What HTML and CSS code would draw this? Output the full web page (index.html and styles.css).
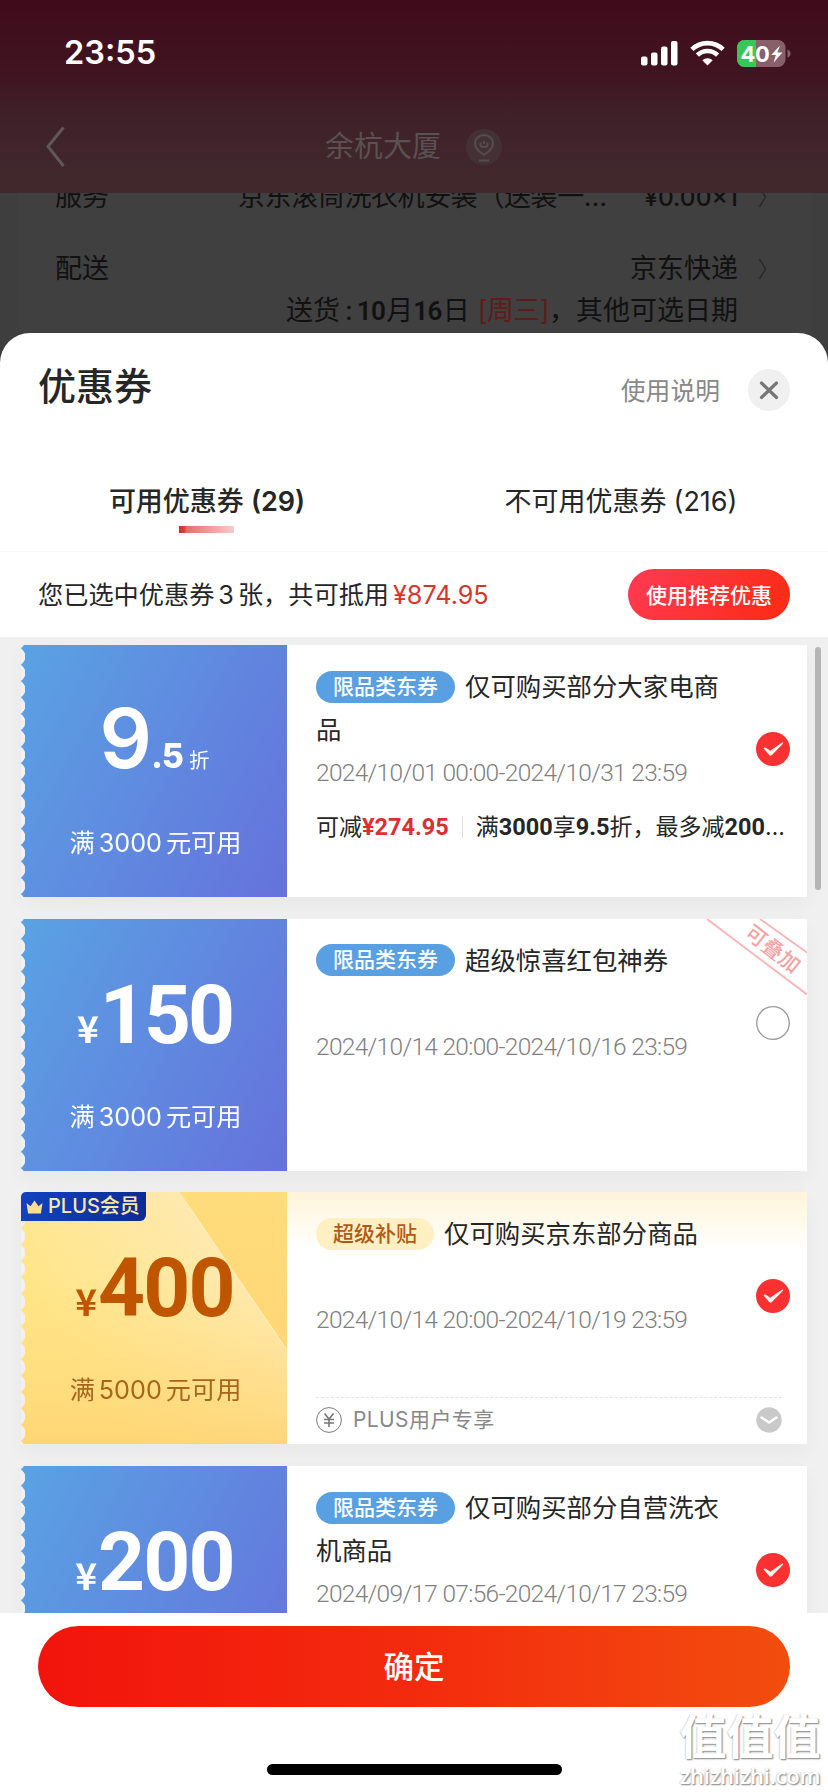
FILE: index.html
```html
<!DOCTYPE html>
<html lang="zh-CN">
<head>
<meta charset="utf-8">
<title>优惠券</title>
<link rel="stylesheet" href="styles.css">
</head>
<body>
<svg class="defs" width="0" height="0" aria-hidden="true">
  <symbol id="checked" viewBox="0 0 34 34"><circle cx="17" cy="17" r="17" fill="#fb3030"/><path d="M7.400 16.200Q8.500 14.800 10 15.800L14.200 18.800 25.800 10.700Q27.600 10.200 27 11.800L16 23Q14.600 24.500 13.200 23Z" fill="#fff0ea"/></symbol>
</svg>
<div class="screen">
  <header class="topbar">
    <div class="status">
      <span class="time">23:55</span>
      <div class="status-icons">
        <svg width="37" height="25" viewBox="0 0 37 25" fill="#fff"><rect x="0" y="15.500" width="6.500" height="9" rx="2"/><rect x="10" y="11.500" width="6.500" height="13" rx="2"/><rect x="20" y="5.500" width="6.500" height="19" rx="2"/><rect x="30" y="0" width="6.500" height="24.500" rx="2"/></svg>
        <svg width="35" height="26" viewBox="0 0 35 26" fill="none" stroke="#fff" stroke-width="4.600"><path d="M1.900 9.400a22.500 22.500 0 0 1 31.200 0"/><path d="M7.400 15.100a14.500 14.500 0 0 1 20.200 0"/><path d="M17.500 25.500l-5.200-5.200a7.500 7.500 0 0 1 10.400 0z" fill="#fff" stroke="none"/></svg>
        <svg width="54" height="27" viewBox="0 0 54 27"><defs><clipPath id="bat"><rect width="48.500" height="27" rx="7.500"/></clipPath></defs><g clip-path="url(#bat)"><rect width="49" height="27" fill="#87606a"/><rect width="19" height="27" fill="#37c658"/></g><path d="M50.500 9.500q3 1 3 4t-3 4z" fill="#87606a"/><text x="3.500" y="22" class="bat-num">40</text><path d="M43 5.500L34.200 15h4.700l-2.400 7.800L45.400 12.600h-5z" fill="#fff"/></svg>
      </div>
    </div>
    <div class="nav">
      <svg class="back" width="22" height="42" viewBox="0 0 22 42" fill="none" stroke="#5f585a" stroke-width="3"><path d="M18.500 1.500L3 20.500 18.500 40"/></svg>
      <span class="store">余杭大厦</span>
      <svg class="pin" width="36" height="36" viewBox="0 0 36 36" fill="none" stroke="#564c4e" stroke-width="2"><circle cx="18" cy="18" r="18" fill="#443135" stroke="none"/><path d="M18 26q-9-6-9-11.500a9 8.500 0 0 1 18 0q0 5.500-9 11.500z"/><path d="M14.500 13.500v2q0 2.500 3.500 2.500t3.500-2.500v-2M18 12v3M13 31.500h10"/></svg>
    </div>
  </header>

  <section class="order">
    <div class="order-row first"><span class="lbl">服务</span><span class="svc">京东滚筒洗衣机安装（送装一…</span><span class="amt">¥0.00×1</span><svg class="chev" width="9" height="22" viewBox="0 0 9 22"><path d="M1.500 1L7.500 11 1.500 21"/></svg></div>
    <div class="order-row"><span class="lbl">配送</span><span class="express">京东快递</span><svg class="chev" width="9" height="22" viewBox="0 0 9 22"><path d="M1.500 1L7.500 11 1.500 21"/></svg></div>
    <div class="order-row date-row"><span>送货</span><span class="colon">:</span><b>10</b><span>月</span><b>16</b><span>日</span><em>[周三]</em><span>，其他可选日期</span></div>
  </section>

  <main class="sheet">
    <div class="sheet-head">
      <h1>优惠券</h1>
      <span class="help">使用说明</span>
      <svg class="close" width="42" height="42" viewBox="0 0 42 42"><circle cx="21" cy="21" r="21" fill="#f0f0f0"/><path d="M13.500 14L28.500 28.500M28.500 14L13.500 28.500" stroke="#777" stroke-width="3.200" stroke-linecap="round"/></svg>
    </div>
    <nav class="tabs">
      <div class="tab active"><span>可用优惠券</span><span class="count">(29)</span></div>
      <div class="tab"><span>不可用优惠券</span><span class="count">(216)</span></div>
    </nav>
    <div class="summary">
      <span class="picked">您已选中优惠券<i>3</i>张，共可抵用</span><span class="saved">¥874.95</span>
      <button class="recommend">使用推荐优惠</button>
    </div>

    <div class="list">
      <article class="coupon">
        <div class="face">
          <div class="value"><span class="nine">9</span><span class="frac">.5</span><span class="zhe">折</span></div>
          <div class="cond">满<i>3000</i>元可用</div>
        </div>
        <div class="info">
          <div class="name"><span class="tag">限品类东券</span>仅可购买部分大家电商<br>品</div>
          <time>2024/10/01 00:00-2024/10/31 23:59</time>
          <div class="detail"><span>可减</span><b class="red">¥274.95</b><span class="bar"></span><span>满</span><b>3000</b><span>享</span><b>9.5</b><span>折，最多减</span><b>200</b><span>…</span></div>
          <svg class="mark"><use href="#checked"/></svg>
        </div>
      </article>

      <article class="coupon">
        <div class="face">
          <div class="value"><span class="yen">¥</span><span class="num one">150</span></div>
          <div class="cond">满<i>3000</i>元可用</div>
        </div>
        <div class="info">
          <div class="name"><span class="tag">限品类东券</span>超级惊喜红包神券</div>
          <time>2024/10/14 20:00-2024/10/16 23:59</time>
          <svg class="ribbon" width="100" height="76" viewBox="0 0 100 76"><path d="M0 0L100 75.500M53 0L100 33.500" stroke="#f7b3b5" stroke-width="1.800"/><text transform="translate(66 30) rotate(38)" text-anchor="middle" class="ribbon-text" x="0" y="7.500">可叠加</text></svg>
          <svg class="mark" viewBox="0 0 34 34"><circle cx="17" cy="17" r="16.300" fill="#fff" stroke="#999" stroke-width="1.300"/></svg>
        </div>
      </article>

      <article class="coupon gold">
        <div class="face">
          <svg class="shine" width="266" height="252" viewBox="0 0 266 252"><defs><linearGradient id="ray" gradientUnits="userSpaceOnUse" x1="210" y1="55" x2="50" y2="165"><stop offset="0" stop-color="#ffe9b0"/><stop offset="1" stop-color="#ffe587"/></linearGradient><linearGradient id="low" x1="0" y1="0" x2="0" y2="1"><stop offset=".35" stop-color="#ffdc7c" stop-opacity="0"/><stop offset="1" stop-color="#ffd271" stop-opacity=".8"/></linearGradient></defs><path d="M0 0H158L266 158V252H0Z" fill="url(#ray)"/><path d="M0 0H158L266 158V252H0Z" fill="url(#low)"/><path d="M158 0L266 158" stroke="#fff0c4" stroke-width="1"/></svg>
          <div class="value"><span class="yen">¥</span><span class="num">400</span></div>
          <div class="cond">满<i>5000</i>元可用</div>
        </div>
        <div class="plus"><svg width="17" height="14" viewBox="0 0 17 14"><path d="M.5 3l4 3.200L8.500.500l4 5.700 4-3.200-1.600 10.500H2.100z" fill="#ffe08c"/></svg><span>PLUS会员</span></div>
        <div class="info">
          <div class="name"><span class="tag">超级补贴</span>仅可购买京东部分商品</div>
          <time>2024/10/14 20:00-2024/10/19 23:59</time>
          <svg class="mark"><use href="#checked"/></svg>
          <div class="member">
            <svg width="26" height="26" viewBox="0 0 26 26" fill="none" stroke="#777"><circle cx="13" cy="13" r="12.400"/><path d="M8.500 6.500l4.500 5.500 4.500-5.500M13 12v8M8 12.500h10M8 16h10" stroke-width="1.600"/></svg>
            <span>PLUS用户专享</span>
            <svg class="more" width="26" height="26" viewBox="0 0 26 26"><circle cx="13" cy="13" r="12.700" fill="#c9c9c9"/><path d="M5.500 10.500l7.500 5 7.500-5" fill="none" stroke="#fff" stroke-width="2.600" stroke-linecap="round" stroke-linejoin="round"/></svg>
          </div>
        </div>
      </article>

      <article class="coupon">
        <div class="face">
          <div class="value"><span class="yen">¥</span><span class="num">200</span></div>
        </div>
        <div class="info">
          <div class="name"><span class="tag">限品类东券</span>仅可购买部分自营洗衣<br>机商品</div>
          <time>2024/09/17 07:56-2024/10/17 23:59</time>
          <svg class="mark"><use href="#checked"/></svg>
        </div>
      </article>
      <span class="scrollbar"></span>
    </div>

    <footer>
      <button class="confirm">确定</button>
      <div class="home"></div>
      <div class="watermark"><span class="wm-big">值值值</span><span class="wm-url">zhizhizhi.com</span></div>
    </footer>
  </main>
</div>
</body>
</html>
```
FILE: styles.css
```css
* { box-sizing: border-box; margin: 0; padding: 0; }
body { width: 828px; height: 1792px; overflow: hidden; background: #3e3e3e; font-family: Inter, "Noto Sans CJK SC", sans-serif; color: #262626; }
svg { display: block; flex: none; }
i, em { font-style: normal; }
.defs { position: absolute; }
.screen { display: flex; flex-direction: column; height: 1792px; white-space: nowrap; }

/* dimmed page behind the sheet */
.topbar { height: 193px; flex: none; background: linear-gradient(#400b1a, #401420 38%, #402028 58%, #40282d 90%); }
.status { height: 106px; display: flex; align-items: center; justify-content: space-between; padding: 0 37px 0 64px; }
.time { font-size: 32.500px; line-height: 40px; font-weight: 600; color: #fff; }
.status-icons { display: flex; align-items: center; gap: 12px; }
.bat-num { font: 700 22px Inter, sans-serif; fill: #fff; letter-spacing: -.5px; }
.nav { display: flex; align-items: center; height: 82px; padding-left: 45px; }
.store { margin-left: 258px; font-size: 29px; color: #5a5153; line-height: 40px; }
.pin { margin-left: 25px; }
.order { height: 140px; flex: none; margin: 0 16px 0 18px; background: #404040; color: #111; overflow: hidden; font-size: 27px; line-height: 42px; }
.order-row { display: flex; align-items: center; height: 42px; padding: 0 45px 0 37px; }
.order-row.first { margin-top: -17px; margin-bottom: 30px; }
.svc { margin-left: 129px; width: 372px; letter-spacing: -.4px; }
.amt { margin-left: auto; font-size: 24.500px; font-weight: 500; }
.chev { margin-left: 20px; fill: none; stroke: #2a2a2a; stroke-width: 1.500; }
.express { margin-left: auto; }
.date-row { justify-content: flex-end; padding-right: 74px; }
.date-row b { font: 600 26px/42px Roboto, sans-serif; letter-spacing: -.6px; margin-right: 1px; }
.date-row .colon { margin: 0 4px 0 5px; }
.date-row em { margin-left: 8px; color: #601c18; letter-spacing: -.6px; }

/* sheet */
.sheet { flex: 1; min-height: 0; background: #fff; border-radius: 30px 30px 0 0; display: flex; flex-direction: column; }
.sheet-head { height: 106px; padding: 0 38px 0 38px; display: flex; align-items: center; }
h1 { font-size: 38px; font-weight: 500; line-height: 50px; }
.help { margin: 6px 28px 0 auto; color: #888; font-size: 24.800px; }
.close { margin-top: 8px; }
.tabs { display: flex; height: 113px; border-bottom: 1px solid #f7f7f7; padding-top: 37px; }
.tab { width: 414px; display: flex; justify-content: center; gap: 7px; font-size: 27px; line-height: 52px; position: relative; }
.tab.active { font-weight: 500; }
.active .count { font-weight: 600; }
.tab.active::after { content: ""; position: absolute; left: 179px; top: 50px; width: 55px; height: 7px; background: linear-gradient(90deg, #cf2a20 0, #d9463c 10%, #e27068 14%, #f7cccb); }
.summary { height: 85px; display: flex; align-items: center; padding: 0 38px 0 38px; font-size: 25.200px; flex: none; }
.picked { margin-top: -3px; }
.summary i { margin: 0 4px; }
.saved { color: #d6362c; margin-left: 4px; }
.recommend { margin-left: auto; width: 162px; height: 51px; padding-bottom: 2px; border: 0; border-radius: 26px; background: linear-gradient(120deg, #ff3b54, #fc2a12); color: #fff; font: 500 21px "Noto Sans CJK SC", sans-serif; }

.list { position: relative; flex: none; height: 976px; overflow: hidden; background: #f0f0f0; padding: 8px 21px 0; display: flex; flex-direction: column; gap: 21.700px; }
.coupon { position: relative; flex: none; height: 252px; display: flex; box-shadow: 0 8px 20px rgba(0,0,0,.035); }
/* the mask cuts the perforated left edge */
.face { position: relative; width: 266px; color: #fff; background: linear-gradient(118deg, #5aa1e3 3%, #6573dc 97%); padding-top: 46px;
  -webkit-mask: radial-gradient(circle 9.700px at -5.200px 50%, transparent 96%, #000) 0 3.300px / 100% 16.400px repeat-y;
  mask: radial-gradient(circle 9.700px at -5.200px 50%, transparent 96%, #000) 0 3.300px / 100% 16.400px repeat-y; }
.value { position: relative; height: 100px; display: flex; align-items: baseline; justify-content: center; padding-left: 1px; line-height: 100px; }
.nine { font-size: 82px; font-weight: 600; letter-spacing: -1px; margin-top: -2px; }
.frac { font-size: 34px; font-weight: 800; letter-spacing: -1px; }
.zhe { font-size: 20.500px; margin-left: 6px; }
.yen { font: 700 37px/40px "Noto Sans CJK SC", sans-serif; margin-right: 1px; }
.num { font: 700 82px/100px Roboto, sans-serif; letter-spacing: -1.800px; }
.num.one { letter-spacing: -3px; }
.cond { position: relative; display: flex; justify-content: center; margin-top: 32px; padding-left: 3px; font-size: 25.200px; line-height: 40px; }
.cond i { margin: 0 4px; }
.info { position: relative; flex: 1; min-width: 0; background: #fff; padding: 20px 0 0 29px; }
.name { font-size: 25.400px; line-height: 43px; height: 86px; }
.tag { display: inline-block; vertical-align: 2.500px; height: 32px; line-height: 31px; padding: 0 17px; border-radius: 16px; margin-right: 10px; background: #58a0e1; color: #fff; font-size: 21px; font-weight: 500; }
time { display: block; font: 300 24.500px/44px Roboto, sans-serif; letter-spacing: -.7px; color: #808080; }
.detail { display: flex; align-items: center; font-size: 23px; line-height: 40px; margin-top: 12px; }
.detail b { font: 700 23.500px/40px Roboto, sans-serif; }
.detail .red { color: #dc2f31; }
.bar { width: 1px; height: 22px; background: #ddd; margin: 0 13px; }
.mark { position: absolute; left: 469px; top: 87px; width: 34px; height: 34px; }
.ribbon { position: absolute; right: 0; top: 0; }
.ribbon-text { font: 500 21px "Noto Sans CJK SC", sans-serif; fill: #f4a3a5; }
.gold .face { color: #c05500; background: linear-gradient(#ffdd7a, #ffd272); }
.gold .cond { color: #a9641e; }
.shine { position: absolute; left: 0; top: 0; }
.plus { position: absolute; left: 0; top: 0; width: 125px; height: 29px; display: flex; align-items: center; gap: 5px; padding-left: 5px; border-radius: 5px 0 6px 0; background: linear-gradient(90deg, #1242c0, #0a2d94); color: #ffe6a4; font-size: 20px; font-weight: 500; line-height: 29px; }
.gold .info { background: linear-gradient(#fff5da, #fff 60px); }
.gold .tag { background: #fff0c4; color: #b25a14; }
.member { position: absolute; left: 29px; right: 25px; top: 205px; height: 44px; border-top: 1px dashed #e4e4e4; display: flex; align-items: center; color: #888; font-size: 21px; letter-spacing: .4px; }
.member span { margin: -4px 0 0 11px; }
.member .more { margin-left: auto; }
.scrollbar { position: absolute; left: 815px; top: 10px; width: 6px; height: 243px; border-radius: 3px; background: #b5b5b5; }

footer { position: relative; flex: 1; padding: 13px 38px 0; }
.confirm { display: block; width: 752px; height: 81px; padding-bottom: 3px; border: 0; border-radius: 41px; background: linear-gradient(90deg, #f2140c, #f32b0e 50%, #f24d0e); color: #fff; font: 500 30.500px "Noto Sans CJK SC", sans-serif; }
.home { width: 295px; height: 11px; border-radius: 6px; background: #000; margin: 57px 0 0 229px; }
.watermark { position: absolute; right: 8px; top: 93px; width: 140px; display: flex; flex-direction: column; align-items: center; color: #fff; text-shadow: 1px 1px 1px #999, 1px 1px 2px #aaa, -1px 0 1px #ddd; }
.wm-big { font: 700 47px/56px "Noto Sans CJK SC", sans-serif; }
.wm-url { font: 600 22px/26px "Open Sans", sans-serif; letter-spacing: -.2px; }
```
